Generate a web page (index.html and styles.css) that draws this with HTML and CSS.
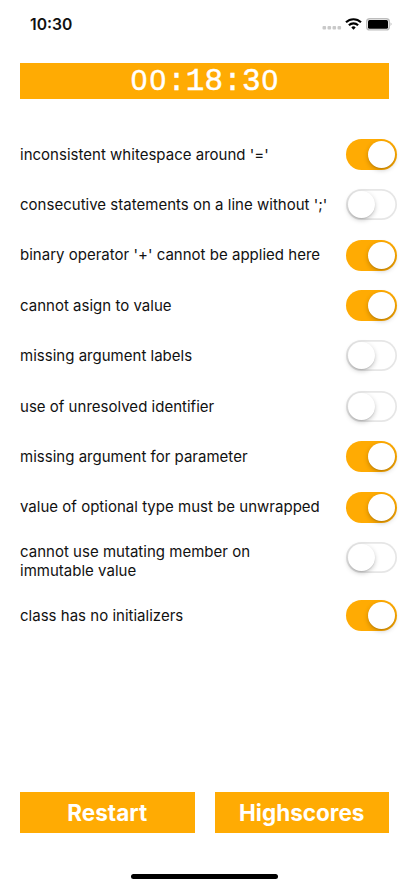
FILE: index.html
```html
<!DOCTYPE html>
<html lang="en">
<head>
<meta charset="utf-8">
<meta name="viewport" content="width=device-width">
<title>Errors</title>
<link rel="stylesheet" href="styles.css">
</head>
<body>
<header class="status">
  <span class="clock">10:30</span>
  <svg class="indicators" width="72" height="16" viewBox="0 0 72 16">
    <g fill="#c9c9c9"><rect x="0.5" y="10" width="3.6" height="3.6" rx="1"/><rect x="5.5" y="10" width="3.6" height="3.6" rx="1"/><rect x="10.5" y="10" width="3.6" height="3.6" rx="1"/><rect x="15.5" y="10" width="3.6" height="3.6" rx="1"/></g>
    <g fill="none" stroke="#000" stroke-width="2.1"><path d="M24 6.3a10.6 10.6 0 0 1 15 0"/><path d="M26.9 9.3a6.5 6.5 0 0 1 9.2 0"/></g>
    <path d="M29.3 11.4a3.2 3.2 0 0 1 4.4 0L31.5 13.7z"/>
    <rect x="44.7" y="2.7" width="22.6" height="11.2" rx="3" fill="#fff" stroke="#bdbdbd" stroke-width="1.4"/>
    <rect x="46" y="4" width="20" height="8.7" rx="1.5"/>
    <path d="M68.7 6.3q1.8 2 0 4z" fill="#999"/>
  </svg>
</header>
<div class="timer"><span class="zero">0</span><span class="zero">0</span><span>:</span><span>1</span><span>8</span><span>:</span><span>3</span><span class="zero">0</span></div>
<main class="list">
  <div class="row"><span class="label">inconsistent whitespace around '='</span><span class="switch on"></span></div>
  <div class="row"><span class="label">consecutive statements on a line without ';'</span><span class="switch"></span></div>
  <div class="row"><span class="label">binary operator '+' cannot be applied here</span><span class="switch on"></span></div>
  <div class="row"><span class="label">cannot asign to value</span><span class="switch on"></span></div>
  <div class="row"><span class="label">missing argument labels</span><span class="switch"></span></div>
  <div class="row"><span class="label">use of unresolved identifier</span><span class="switch"></span></div>
  <div class="row"><span class="label">missing argument for parameter</span><span class="switch on"></span></div>
  <div class="row"><span class="label">value of optional type must be unwrapped</span><span class="switch on"></span></div>
  <div class="row"><span class="label">cannot use mutating member on<br>immutable value</span><span class="switch"></span></div>
  <div class="row"><span class="label">class has no initializers</span><span class="switch on"></span></div>
</main>
<footer class="actions">
  <button class="action">Restart</button>
  <button class="action">Highscores</button>
</footer>
<div class="home"></div>
</body>
</html>
```
FILE: styles.css
```css
* { box-sizing: border-box; }
body {
  margin: 0;
  height: 886px;
  overflow: hidden;
  display: flex;
  flex-direction: column;
  background: #fff;
  color: #111;
  font-family: Inter, sans-serif;
}
.status {
  height: 63px;
  padding: 16px 15px 0 30px;
  display: flex;
  justify-content: space-between;
  align-items: flex-start;
}
.clock { font-size: 15.7px; font-weight: 600; line-height: 18px; }
.indicators { flex: none; }
.timer {
  height: 36.3px;
  margin: 0 20px;
  display: flex;
  justify-content: center;
  align-items: baseline;
  background: #ffab03;
  color: #fff;
  font: 31px/34px "Liberation Mono", monospace;
  -webkit-text-stroke: 0.5px #fff;
}
.timer span { width: 18.7px; text-align: center; }
.timer .zero { font-family: "Liberation Sans", sans-serif; font-size: 29px; }
.list {
  margin-top: 39.5px;
  padding: 0 12.3px 0 20px;
  display: flex;
  flex-direction: column;
  gap: 19.4px;
}
.row { display: flex; justify-content: space-between; min-height: 31px; }
.label { align-self: center; font-size: 15px; line-height: 19.25px; letter-spacing: 0.015px; white-space: nowrap; }
.switch {
  flex: none;
  width: 50.5px;
  height: 31px;
  padding: 2px;
  display: flex;
  border-radius: 16px;
  box-shadow: inset 0 0 0 1.7px #e6e6e6;
}
.switch::before {
  content: "";
  width: 27px;
  height: 27px;
  border-radius: 50%;
  background: #fff;
  box-shadow: 0 2px 5px rgba(0, 0, 0, .22), 0 1px 1px rgba(0, 0, 0, .1);
}
.switch.on { justify-content: flex-end; background: #ffab03; box-shadow: none; }
.actions { margin: auto 20px 0; display: flex; gap: 20px; }
.action {
  flex: 1;
  height: 40.6px;
  padding: 1px 0 0;
  border: 0;
  background: #ffab03;
  color: #fff;
  font: 700 22.5px/40px Inter, sans-serif;
}
.home { width: 147px; height: 5px; margin: 41px auto 7.4px; border-radius: 3px; background: #000; }
```
